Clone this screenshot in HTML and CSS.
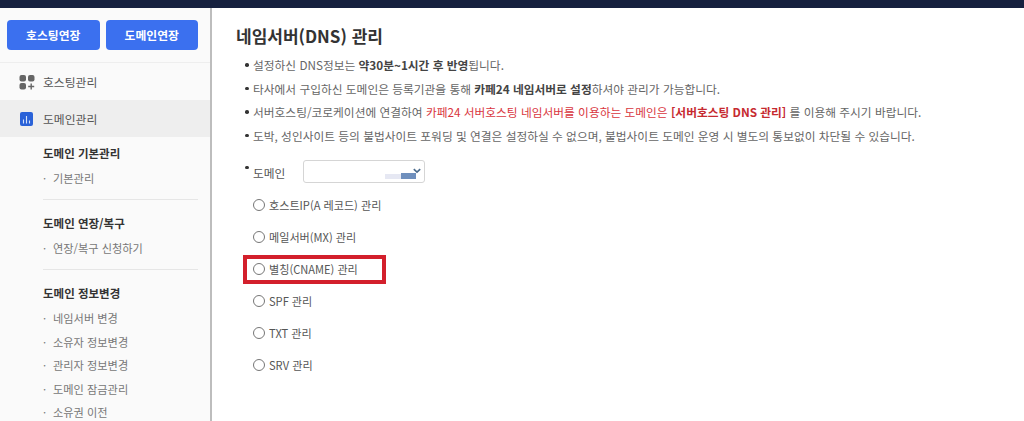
FILE: index.html
```html
<!DOCTYPE html>
<html lang="ko">
<head>
    <meta charset="UTF-8">
    <meta name="viewport" content="width=device-width, initial-scale=1.0">
    <title>네임서버(DNS) 관리</title>
    <link rel="stylesheet" href="styles.css">
</head>
<body>
    <div class="top-bar"></div>
    <div class="layout">
        <aside class="sidebar">
            <div class="side-buttons">
                <a class="side-btn">호스팅연장</a>
                <a class="side-btn">도메인연장</a>
            </div>
            <div class="menu-item">
                <svg class="menu-icon" viewBox="0 0 16 16" width="16" height="16">
                    <rect x="0.5" y="1" width="6.5" height="6.5" rx="2" fill="#666"/>
                    <rect x="9" y="1" width="6.5" height="6.5" rx="2" fill="#666"/>
                    <rect x="0.5" y="9" width="6.5" height="6.5" rx="2" fill="#666"/>
                    <path d="M12.2 9.5v6M9.2 12.5h6" stroke="#666" stroke-width="1.4" fill="none"/>
                </svg>
                <span>호스팅관리</span>
            </div>
            <div class="menu-item active">
                <svg class="menu-icon" viewBox="0 0 16 16" width="16" height="16">
                    <rect x="1" y="1" width="13" height="14" rx="2" fill="#2a62d8"/>
                    <path d="M4.5 8.5v4M7.5 5v7.5M10.5 9.5v3" stroke="#d5e2fb" stroke-width="1.1" fill="none"/>
                </svg>
                <span>도메인관리</span>
            </div>
            <div class="sub-menu">
                <div class="sub-group">
                    <h4>도메인 기본관리</h4>
                    <a>기본관리</a>
                </div>
                <div class="sub-group">
                    <h4>도메인 연장/복구</h4>
                    <a>연장/복구 신청하기</a>
                </div>
                <div class="sub-group">
                    <h4>도메인 정보변경</h4>
                    <a>네임서버 변경</a>
                    <a>소유자 정보변경</a>
                    <a>관리자 정보변경</a>
                    <a>도메인 잠금관리</a>
                    <a>소유권 이전</a>
                </div>
            </div>
        </aside>

        <main class="content">
            <h2>네임서버(DNS) 관리</h2>
            <ul class="notes">
                <li>설정하신 DNS정보는 <strong>약30분~1시간 후 반영</strong>됩니다.</li>
                <li>타사에서 구입하신 도메인은 등록기관을 통해 <strong>카페24 네임서버로 설정</strong>하셔야 관리가 가능합니다.</li>
                <li>서버호스팅/코로케이션에 연결하여 <span class="red">카페24 서버호스팅 네임서버를 이용하는 도메인은 <strong>[서버호스팅 DNS 관리]</strong></span> 를 이용해 주시기 바랍니다.</li>
                <li>도박, 성인사이트 등의 불법사이트 포워딩 및 연결은 설정하실 수 없으며, 불법사이트 도메인 운영 시 별도의 통보없이 차단될 수 있습니다.</li>
            </ul>

            <div class="domain-row">
                <span class="dot"></span>
                <label for="domain">도메인</label>
                <div class="select-wrap">
                    <select id="domain"><option></option></select>
                    <span class="blur-a"></span>
                    <span class="blur-b"></span>
                    <svg class="chevron" viewBox="0 0 8 6" width="8" height="6">
                        <path d="M0.8 1.2l3.2 3 3.2-3" stroke="#4a6a8c" stroke-width="1.6" fill="none"/>
                    </svg>
                </div>
            </div>

            <form class="record-list">
                <label class="record"><input type="radio" name="record"> 호스트IP(A 레코드) 관리</label>
                <label class="record"><input type="radio" name="record"> 메일서버(MX) 관리</label>
                <label class="record"><input type="radio" name="record"> 별칭(CNAME) 관리<span class="highlight"></span></label>
                <label class="record"><input type="radio" name="record"> SPF 관리</label>
                <label class="record"><input type="radio" name="record"> TXT 관리</label>
                <label class="record"><input type="radio" name="record"> SRV 관리</label>
            </form>
        </main>
    </div>
</body>
</html>
```

FILE: styles.css
```css
* {
    box-sizing: border-box;
}

html, body {
    height: 100%;
}

body {
    margin: 0;
    overflow: hidden;
    font-family: "Noto Sans CJK KR", "Noto Sans", sans-serif;
    color: #444;
    background-color: white;
}

.top-bar {
    height: 8px;
    background-color: #16213f;
}

.layout {
    display: flex;
    height: 413px;
}

.sidebar {
    width: 212px;
    flex-shrink: 0;
    background-color: #fafafa;
    border-right: 2px solid #bdbdbd;
    overflow: hidden;
}

.side-buttons {
    display: flex;
    gap: 6px;
    padding: 12px 12px 12px 7px;
    border-bottom: 1px solid #eee;
    height: 55px;
}

.side-btn {
    flex: 1;
    height: 30px;
    line-height: 30px;
    text-align: center;
    font-size: 11.8px;
    font-weight: 700;
    color: white;
    background-color: #3b70ef;
    border-radius: 4px;
}

.menu-item {
    display: flex;
    align-items: center;
    gap: 8px;
    height: 37px;
    padding-left: 19px;
    font-size: 11.8px;
    color: #555;
}

.menu-item.active {
    background-color: #eeeeee;
}

.sub-menu {
    padding: 5px 12px 0 43px;
}

.sub-group {
    border-bottom: 1px solid #e6e6e6;
    padding: 0 0 8.5px;
    margin-bottom: 12px;
}

.sub-group:last-child {
    border-bottom: none;
}

.sub-group h4 {
    margin: 0 0 3px;
    height: 22px;
    line-height: 22px;
    font-size: 11.5px;
    font-weight: 700;
    color: #333;
}

.sub-group a {
    display: block;
    height: 23.5px;
    line-height: 23.5px;
    font-size: 11.2px;
    color: #777;
}

.sub-group a::before {
    content: "·";
    display: inline-block;
    width: 10px;
}

.content {
    flex: 1;
    padding: 15px 0 0 24px;
}

.content h2 {
    margin: 0 0 4px;
    height: 26px;
    line-height: 26px;
    font-size: 17px;
    font-weight: 700;
    color: #333;
}

.notes {
    list-style: none;
    margin: 0 0 0 9px;
    padding: 0;
    font-size: 11.72px;
    color: #666;
}

.notes li {
    position: relative;
    height: 23.5px;
    line-height: 23.5px;
    padding-left: 8px;
    white-space: nowrap;
}

.notes li::before {
    content: "";
    position: absolute;
    left: 0;
    top: 10px;
    width: 3.5px;
    height: 3.5px;
    border-radius: 50%;
    background-color: #333;
}

.notes strong {
    color: #444;
}

.notes .red,
.notes .red strong {
    color: #d9363e;
}

.notes .red strong {
    color: #c62a30;
}

.domain-row {
    display: flex;
    align-items: center;
    margin: 12.5px 0 0 9px;
    height: 24px;
    font-size: 11.72px;
    color: #555;
}

.dot {
    width: 3.5px;
    height: 3.5px;
    border-radius: 50%;
    background-color: #333;
    margin: -8px 4.5px 0 0;
}

.domain-row label {
    margin: 2px 18px 0 0;
}

.select-wrap {
    position: relative;
    width: 122px;
    height: 23px;
}

.select-wrap select {
    appearance: none;
    width: 100%;
    height: 100%;
    background-color: white;
    border: 1px solid #d5d5d5;
    border-radius: 3px;
}

.blur-a {
    position: absolute;
    left: 82px;
    top: 14px;
    width: 16px;
    height: 5px;
    background-color: #e6e8f3;
}

.blur-b {
    position: absolute;
    left: 98px;
    top: 13px;
    width: 15px;
    height: 6px;
    background-color: #6f8fbd;
}

.chevron {
    position: absolute;
    right: 4px;
    top: 8px;
}

.record-list {
    margin: 5.5px 0 0 17px;
}

.record {
    position: relative;
    display: flex;
    align-items: center;
    gap: 3px;
    height: 32px;
    font-size: 11.1px;
    color: #555;
}

.record input {
    width: 12px;
    height: 12px;
    margin: 0 1px 0 0;
    accent-color: #777;
}

.highlight {
    position: absolute;
    left: -10px;
    top: 2px;
    width: 143px;
    height: 29px;
    border: 4px solid #d3202c;
    pointer-events: none;
}
```
